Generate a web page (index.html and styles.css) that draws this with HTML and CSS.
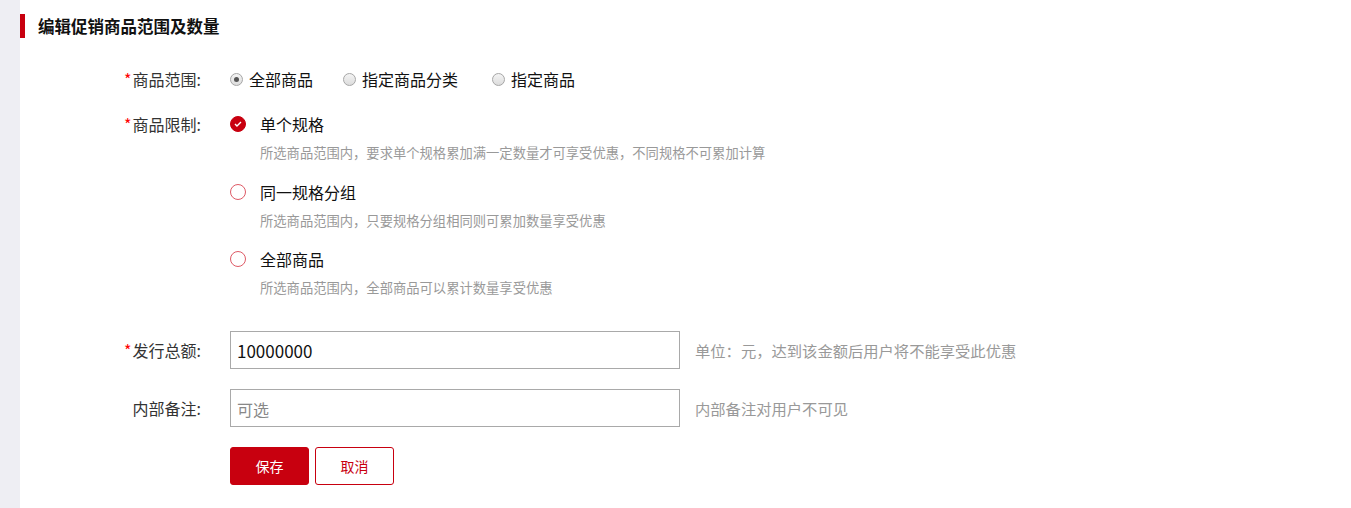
FILE: index.html
```html
<!DOCTYPE html>
<html lang="zh-CN">
<head>
    <meta charset="UTF-8">
    <meta name="viewport" content="width=device-width, initial-scale=1.0">
    <title>编辑促销商品范围及数量</title>
    <link rel="stylesheet" href="styles.css">
</head>
<body>
    <div class="page">
        <div class="side"></div>
        <div class="main">
            <h2 class="title">编辑促销商品范围及数量</h2>

            <!-- 商品范围 -->
            <div class="row row-scope">
                <div class="label"><span class="req">*</span>商品范围:</div>
                <div class="field scope">
                    <label class="sys-radio"><span class="dot checked"></span>全部商品</label>
                    <label class="sys-radio"><span class="dot"></span>指定商品分类</label>
                    <label class="sys-radio"><span class="dot"></span>指定商品</label>
                </div>
            </div>

            <!-- 商品限制 -->
            <div class="row row-limit">
                <div class="label"><span class="req">*</span>商品限制:</div>
                <div class="field">
                    <div class="option">
                        <div class="option-title">
                            <span class="circle on">
                                <svg width="8" height="6" viewBox="0 0 8 6"><path d="M1 3l2 2 4-4" fill="none" stroke="#fff" stroke-width="1.4"/></svg>
                            </span>
                            单个规格
                        </div>
                        <div class="option-desc">所选商品范围内，要求单个规格累加满一定数量才可享受优惠，不同规格不可累加计算</div>
                    </div>
                    <div class="option">
                        <div class="option-title"><span class="circle"></span>同一规格分组</div>
                        <div class="option-desc">所选商品范围内，只要规格分组相同则可累加数量享受优惠</div>
                    </div>
                    <div class="option">
                        <div class="option-title"><span class="circle"></span>全部商品</div>
                        <div class="option-desc">所选商品范围内，全部商品可以累计数量享受优惠</div>
                    </div>
                </div>
            </div>

            <!-- 发行总额 -->
            <div class="row row-input">
                <div class="label"><span class="req">*</span>发行总额:</div>
                <div class="field inline">
                    <input class="input-box" type="text" value="10000000">
                    <span class="hint">单位：元，达到该金额后用户将不能享受此优惠</span>
                </div>
            </div>

            <div class="row row-input">
                <div class="label">内部备注:</div>
                <div class="field inline">
                    <input class="input-box" type="text" placeholder="可选">
                    <span class="hint">内部备注对用户不可见</span>
                </div>
            </div>

            <div class="row actions">
                <div class="label"></div>
                <div class="field inline">
                    <button class="btn save-btn">保存</button>
                    <button class="btn cancel-btn">取消</button>
                </div>
            </div>
        </div>
    </div>
</body>
</html>
```

FILE: styles.css
```css
body {
    margin: 0;
    padding: 0;
    font-family: "Noto Sans CJK SC", "Noto Sans", sans-serif;
    color: #222;
    background: #fff;
}
.page { display: flex; min-height: 508px; }
.side { width: 20px; background: #eeeef3; flex-shrink: 0; }
.main { flex: 1; padding-top: 14px; }

.title {
    margin: 0;
    font-size: 16.5px;
    line-height: 24px;
    font-weight: bold;
    color: #111;
    border-left: 5px solid #c8000f;
    padding-left: 13px;
}

.row { display: flex; }
.label {
    width: 181px;
    flex-shrink: 0;
    text-align: right;
    font-size: 16px;
    line-height: 24px;
    color: #333;
    padding-right: 1px;
}
.req { color: #f00; margin-right: 1px; }
.field { margin-left: 28px; }
.inline { display: flex; align-items: center; }

/* 商品范围 */
.row-scope { margin-top: 29px; }
.scope { display: flex; align-items: center; font-size: 16px; line-height: 24px; color: #111; }
.sys-radio { display: flex; align-items: center; margin-right: 30px; }
.sys-radio:nth-child(2) { margin-right: 34px; }
.dot {
    width: 11px;
    height: 11px;
    border: 1px solid #a6a6a6;
    border-radius: 50%;
    background: linear-gradient(#f4f4f4, #dcdcdc);
    margin-right: 6px;
    position: relative;
}
.dot.checked::after {
    content: "";
    position: absolute;
    left: 3px;
    top: 3px;
    width: 5px;
    height: 5px;
    border-radius: 50%;
    background: #555;
}

/* 商品限制 */
.row-limit { margin-top: 21px; }
.option { margin-bottom: 14.5px; }
.option:last-child { margin-bottom: 0; }
.option-title {
    display: flex;
    align-items: center;
    font-size: 16px;
    line-height: 24px;
    color: #111;
}
.circle {
    width: 14px;
    height: 14px;
    border: 1px solid #de5a66;
    border-radius: 50%;
    margin-right: 14px;
    display: flex;
    align-items: center;
    justify-content: center;
}
.circle.on { background: #c8000f; border-color: #c8000f; }
.option-desc {
    margin-top: 5px;
    padding-left: 30px;
    font-size: 13.3px;
    line-height: 24px;
    color: #999;
}

/* 输入框 */
.row-input { align-items: center; }
.row-limit + .row-input { margin-top: 31px; }
.row-input + .row-input { margin-top: 20px; }
.input-box {
    width: 450px;
    height: 38px;
    box-sizing: border-box;
    border: 1px solid #a9a9a9;
    padding: 0 6px;
    font-family: inherit;
    font-size: 17px;
    color: #111;
    outline: none;
}
.input-box::placeholder { color: #888; font-size: 16px; }
.hint { margin-left: 15px; font-size: 15.3px; color: #999; }

/* 按钮 */
.actions { margin-top: 20px; }
.btn {
    width: 79px;
    height: 38px;
    border-radius: 3px;
    font-family: inherit;
    font-size: 14px;
    cursor: pointer;
    border: 1px solid #c8000f;
}
.save-btn { background: #c8000f; color: #fff; margin-right: 6px; }
.cancel-btn { background: #fff; color: #c8000f; }
```
